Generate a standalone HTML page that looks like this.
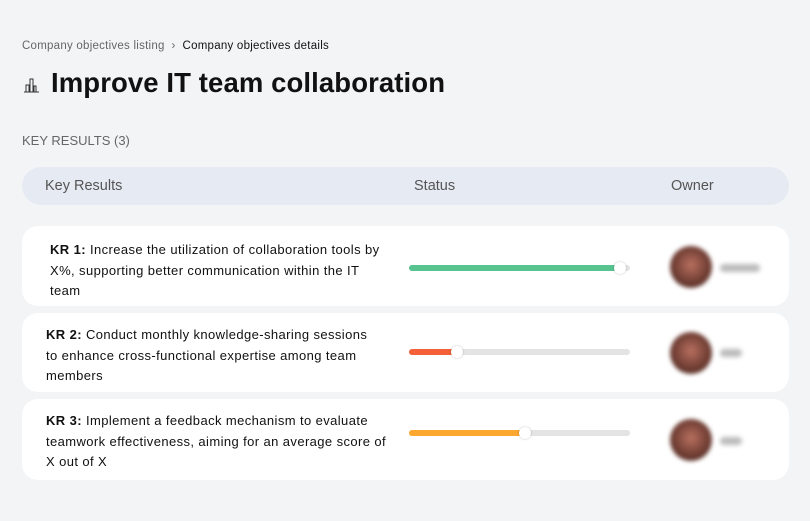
<!DOCTYPE html>
<html><head><style>
*{margin:0;padding:0;box-sizing:border-box}
body{width:810px;height:521px;background:#f3f4f6;font-family:"Liberation Sans",sans-serif;color:#111;position:relative;overflow:hidden}
.abs{position:absolute}
.bc{left:22px;top:40px;font-size:11.5px;color:#666;letter-spacing:0.25px}
.bc b{font-weight:normal;color:#111}
.title{left:51px;top:67px;font-size:27.5px;font-weight:bold;color:#111;letter-spacing:0.1px}
.kr{left:22px;top:133px;font-size:13px;color:#666}
.head{left:22px;top:167px;width:767px;height:38px;background:#e6ebf3;border-radius:19px;font-size:14.5px;color:#555}
.head span{position:absolute;top:11px}
.card{left:22px;width:767px;background:#fff;border-radius:16px}
.txt{position:absolute;top:14px;white-space:nowrap;font-size:13px;line-height:20.5px;color:#111;letter-spacing:0.4px}
.bar{position:absolute;left:387px;width:221px;height:6px;background:#e4e4e4;border-radius:3px}
.fill{height:6px;border-radius:3px}
.knob{position:absolute;top:-3px;width:12px;height:12px;border-radius:50%;background:#fff;box-shadow:0 0 2px rgba(0,0,0,.25)}
.av{position:absolute;left:648px;width:42px;height:42px;border-radius:50%;background:radial-gradient(circle at 50% 45%,#b87060,#6b3a30 60%,#3a2420);filter:blur(2px)}
.nm{position:absolute;left:698px;width:40px;height:8px;background:#bbb;border-radius:4px;filter:blur(2.5px)}
</style></head><body>
<div class="abs bc">Company objectives listing &nbsp;›&nbsp; <b>Company objectives details</b></div>
<svg class="abs" style="left:22px;top:77px" width="18" height="16" viewBox="0 0 18 16"><path d="M2 15h15M4 15V8h3v7M8 15V2h3v13M12 15V9h2v6" fill="none" stroke="#333" stroke-width="1"/></svg>
<div class="abs title">Improve IT team collaboration</div>
<div class="abs kr">KEY RESULTS (3)</div>
<div class="abs head"><span style="left:23px">Key Results</span><span style="left:392px">Status</span><span style="left:649px">Owner</span></div>

<div class="abs card" style="top:226px;height:80px">
<div class="txt" style="left:28px;top:14px"><b>KR 1:</b> Increase the utilization of collaboration tools by<br>X%, supporting better communication within the IT<br>team</div>
<div class="bar" style="top:39px"><div class="fill" style="width:211px;background:#57c38f"></div><div class="knob" style="left:205px"></div></div>
<div class="av" style="top:20px"></div><div class="nm" style="top:38px"></div>
</div>
<div class="abs card" style="top:313px;height:79px">
<div class="txt" style="left:24px;top:12px"><b>KR 2:</b> Conduct monthly knowledge-sharing sessions<br>to enhance cross-functional expertise among team<br>members</div>
<div class="bar" style="top:36px"><div class="fill" style="width:48px;background:#f4603a"></div><div class="knob" style="left:42px"></div></div>
<div class="av" style="top:19px"></div><div class="nm" style="top:36px;width:22px"></div>
</div>
<div class="abs card" style="top:399px;height:81px">
<div class="txt" style="left:24px;top:12px"><b>KR 3:</b> Implement a feedback mechanism to evaluate<br>teamwork effectiveness, aiming for an average score of<br>X out of X</div>
<div class="bar" style="top:31px"><div class="fill" style="width:116px;background:#fba730"></div><div class="knob" style="left:110px"></div></div>
<div class="av" style="top:20px"></div><div class="nm" style="top:38px;width:22px"></div>
</div>
</body></html>
